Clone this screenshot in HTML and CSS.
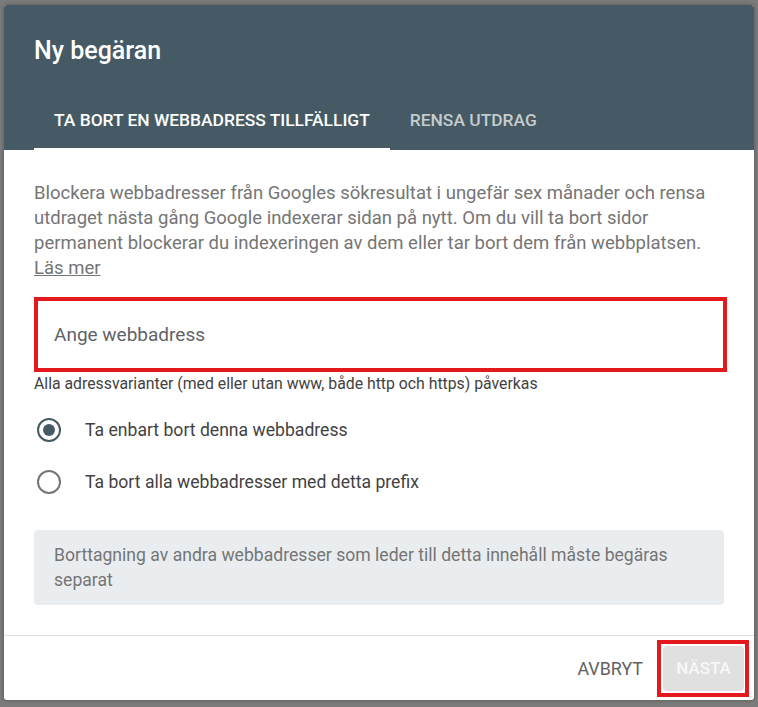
FILE: index.html
```html
<!DOCTYPE html>
<html lang="sv">
<head>
<meta charset="utf-8">
<title>Ny begäran</title>
<link rel="stylesheet" href="styles.css">
</head>
<body>
<div class="dialog">
  <header class="dlg-head">
    <h1 class="title">Ny begäran</h1>
    <div class="tabs">
      <div class="tab active">Ta bort en webbadress tillfälligt</div>
      <div class="tab">Rensa utdrag</div>
    </div>
  </header>
  <main class="dlg-body">
    <p class="desc">Blockera webbadresser från Googles sökresultat i ungefär sex månader och rensa utdraget nästa gång Google indexerar sidan på nytt. Om du vill ta bort sidor permanent blockerar du indexeringen av dem eller tar bort dem från webbplatsen. <a href="#" class="more">Läs mer</a></p>
    <input class="field" type="text" placeholder="Ange webbadress">
    <p class="hint">Alla adressvarianter (med eller utan www, både http och https) påverkas</p>
    <div class="radios">
      <label class="radio-row"><span class="radio checked"></span>Ta enbart bort denna webbadress</label>
      <label class="radio-row"><span class="radio"></span>Ta bort alla webbadresser med detta prefix</label>
    </div>
    <div class="note">Borttagning av andra webbadresser som leder till detta innehåll måste begäras separat</div>
  </main>
  <footer class="dlg-foot">
    <button class="btn btn-cancel">Avbryt</button>
    <span class="mark"><button class="btn btn-next">Nästa</button></span>
  </footer>
</div>
</body>
</html>
```

FILE: styles.css
```css
* { box-sizing: border-box; }

body {
  margin: 0;
  padding: 5px 4px 7px;
  background: #7b7b7b;
  font-family: Roboto, "Noto Sans", "Liberation Sans", sans-serif;
}

.dialog {
  width: 750px;
  height: 695px;
  background: #fff;
  border-radius: 3px;
  overflow: hidden;
  display: flex;
  flex-direction: column;
  box-shadow: 0 0 4px rgba(0, 0, 0, 0.3);
}

.dlg-head {
  background: #455a64;
  height: 145px;
  padding: 30px 30px 0;
  display: flex;
  flex-direction: column;
}

.title {
  margin: 0;
  font-size: 25px;
  line-height: 32px;
  font-weight: 500;
  color: #fff;
}

.tabs {
  display: flex;
  margin-top: auto;
}

.tab {
  padding: 14px 20px 18px;
  font-size: 17.4px;
  line-height: 20px;
  font-weight: 500;
  text-transform: uppercase;
  color: rgba(255, 255, 255, 0.7);
  border-bottom: 2px solid transparent;
}

.tab.active {
  color: #fff;
  border-bottom-color: #fff;
}

.dlg-body {
  flex: 1;
  padding: 31px 30px 0;
  display: flex;
  flex-direction: column;
}

.desc {
  margin: 0;
  font-size: 18.5px;
  line-height: 25px;
  color: #757575;
}

.more {
  color: inherit;
  text-decoration: underline;
}

.field {
  margin: 16px -3px 0 0;
  height: 75px;
  border: 4px solid #e3191d;
  padding: 0 16px;
  font-family: inherit;
  font-size: 19px;
  color: #212121;
  outline: none;
  background: #fff;
}

.field::placeholder {
  color: #5f6368;
  opacity: 1;
}

.hint {
  margin: 2px 0 0;
  font-size: 15.8px;
  line-height: 20px;
  color: #424242;
}

.radios {
  margin-top: 10px;
}

.radio-row {
  display: flex;
  align-items: center;
  height: 52px;
  font-size: 17.6px;
  color: #424242;
}

.radio {
  flex: none;
  width: 24px;
  height: 24px;
  margin: 0 24px 0 3px;
  border-radius: 50%;
  border: 2.4px solid #757575;
  display: flex;
  align-items: center;
  justify-content: center;
}

.radio.checked {
  border-color: #455a64;
}

.radio.checked::after {
  content: "";
  width: 12px;
  height: 12px;
  border-radius: 50%;
  background: #455a64;
}

.note {
  margin-top: 22px;
  background: #e9edf0;
  border-radius: 4px;
  padding: 12.5px 20px;
  font-size: 17.6px;
  line-height: 25px;
  color: #757575;
}

.dlg-foot {
  height: 65px;
  border-top: 1px solid #e0e0e0;
  display: flex;
  align-items: center;
  justify-content: flex-end;
  gap: 4px;
  padding: 0 5px 0 10px;
}

.btn {
  height: 45px;
  padding: 0 10px;
  border: 0;
  border-radius: 4px;
  background: none;
  font-family: inherit;
  text-transform: uppercase;
}

.btn-cancel {
  font-size: 17.9px;
  color: #616161;
  font-weight: 400;
}

.mark {
  display: flex;
  padding: 2px 1px 2px 2px;
  border: 4px solid #e3191d;
}

.btn-next {
  width: 81px;
  padding: 0;
  font-size: 17px;
  background: #e0e0e0;
  color: #f7f7f7;
  font-weight: 500;
}
```
